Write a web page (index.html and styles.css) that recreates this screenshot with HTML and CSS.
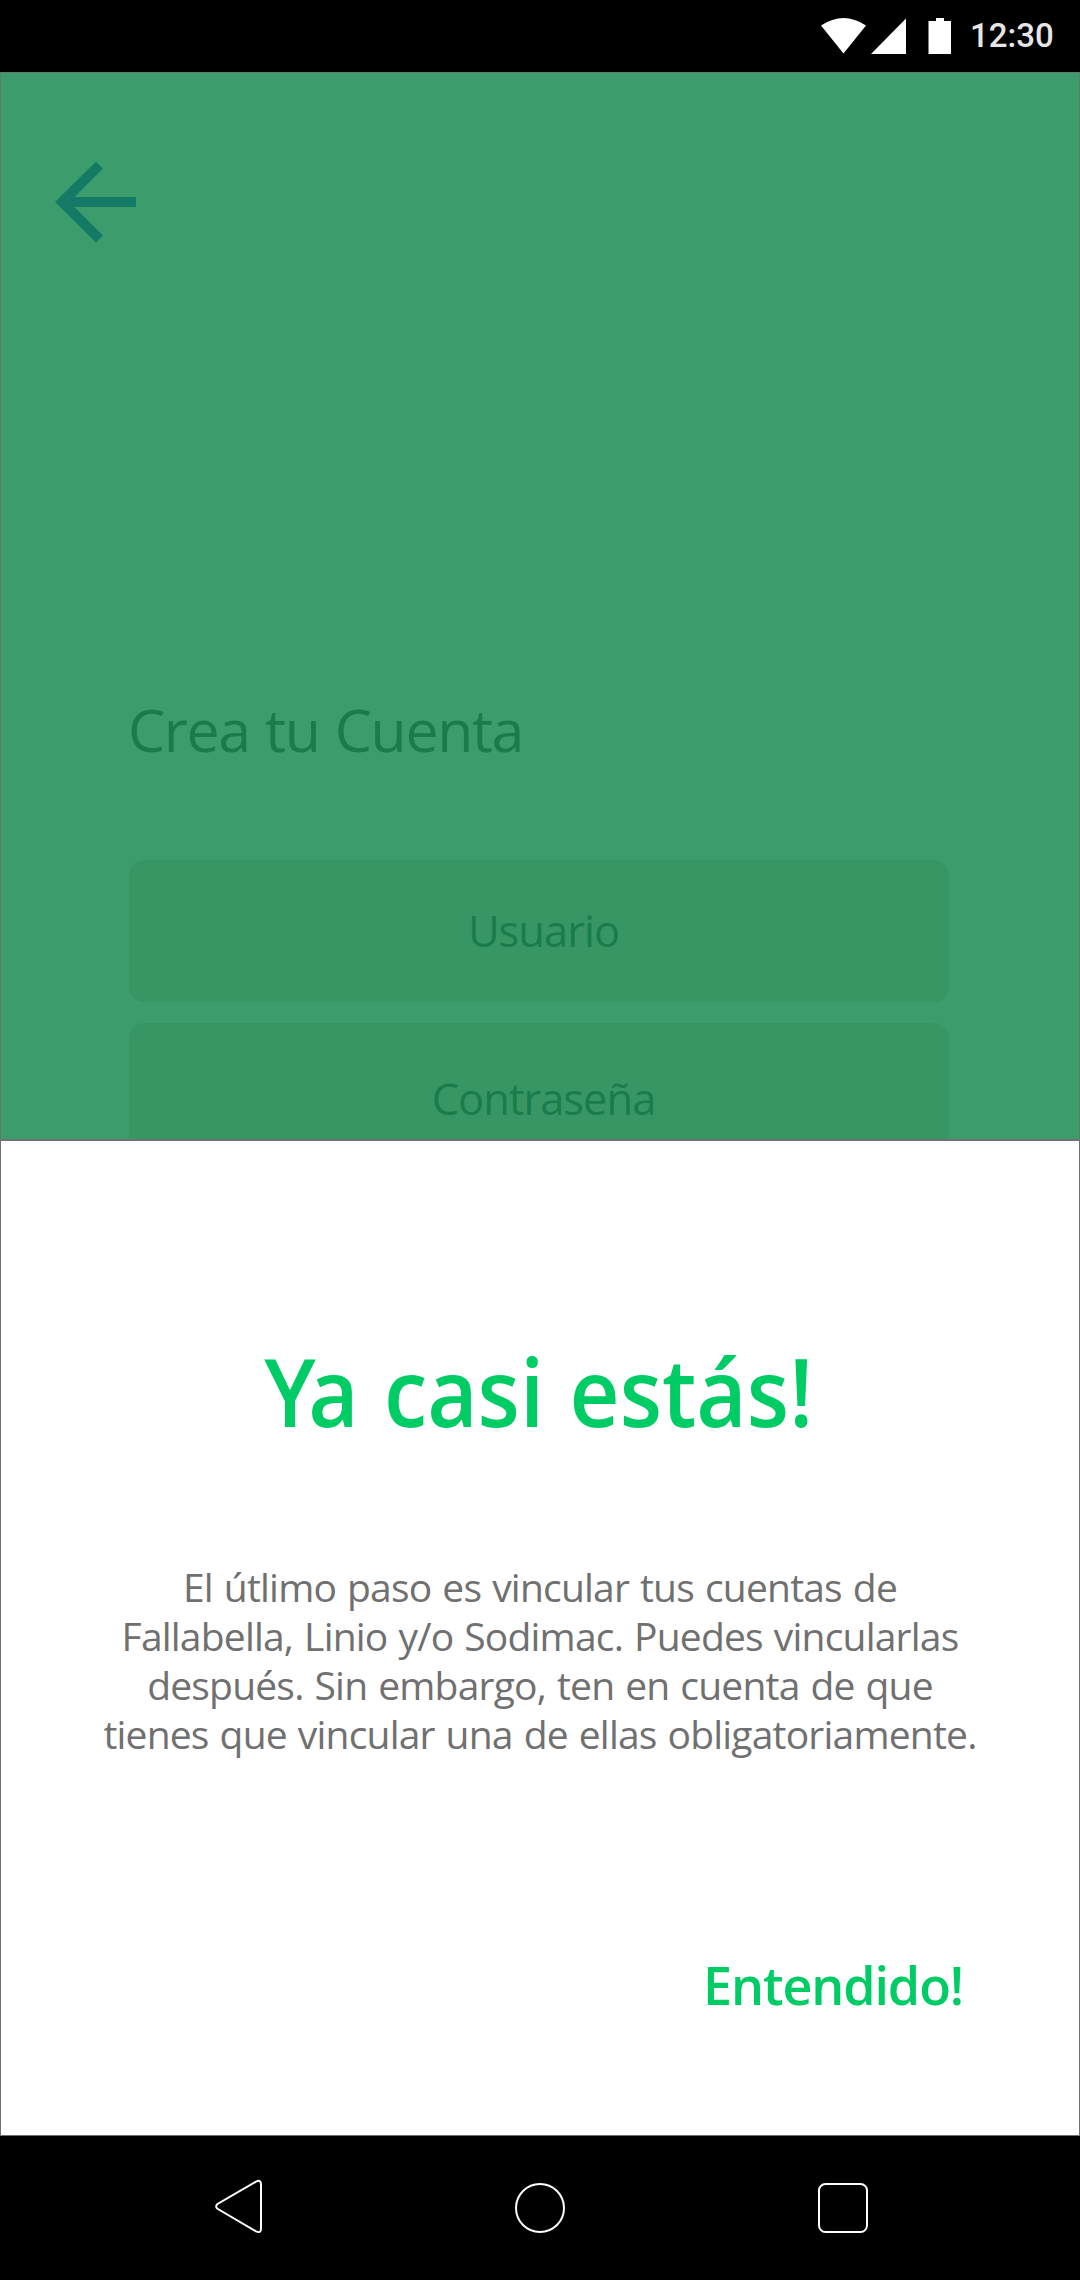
FILE: index.html
```html
<!DOCTYPE html>
<html lang="es">
<head>
<meta charset="utf-8">
<title>Crea tu Cuenta</title>
<link rel="stylesheet" href="styles.css">
</head>
<body>
<div class="phone">
  <header class="status">
    <svg class="status-icons" width="130" height="36" viewBox="0 0 130 36" fill="#fff">
      <path d="M0 7.500Q22.500-7.500 45 7.500L22.500 35.500Z"/>
      <path d="M50 36L85 .500V36Z"/>
      <path d="M107.500 3H115V0H123V3H130V36H107.500Z"/>
    </svg>
    <span class="clock">12:30</span>
  </header>
  <main class="account">
    <svg class="back" width="82" height="82" viewBox="0 0 82 82">
      <path d="M0 41L41 .500L48 7.500L19.500 36H81V46H19.500L48 74.500L41 81.500Z"/>
    </svg>
    <h1 class="heading">Crea tu Cuenta</h1>
    <div class="field user">Usuario</div>
    <div class="field password">Contraseña</div>
  </main>
  <section class="sheet">
    <h2 class="title"><span class="kern">Y</span>a casi estás!</h2>
    <p class="message">El útlimo paso es vincular tus cuentas de<br>Fallabella, Linio y/o Sodimac. Puedes vincularlas<br>después. Sin embargo, ten en cuenta de que<br>tienes que vincular una de ellas obligatoriamente.</p>
    <button class="confirm">Entendido!</button>
  </section>
  <nav class="nav">
    <svg width="1080" height="144" viewBox="0 0 1080 144" fill="none" stroke="#fff" stroke-width="2">
      <path d="M217.500 68Q214.800 70.400 217.500 72.800L256 95.400Q261 97.700 261 92.700V48.200Q261 43.200 256 45.700Z"/>
      <circle cx="540" cy="72" r="24"/>
      <rect x="819" y="48" width="48" height="48" rx="6.500"/>
    </svg>
  </nav>
</div>
</body>
</html>
```
FILE: styles.css
```css
* { box-sizing: border-box; }

body {
  margin: 0;
  background: #000;
  font-family: "Open Sans", "Noto Sans", sans-serif;
}

.phone {
  width: 1080px;
  height: 2280px;
  display: flex;
  flex-direction: column;
  overflow: hidden;
}

.status {
  height: 72px;
  display: flex;
  flex: none;
  padding: 18px 0 0 821px;
  gap: 19px;
  background: #000;
}

.status-icons { flex: none; }

.clock {
  font: 500 33px/35px Roboto, sans-serif;
  color: #e6e6e6;
}

.account {
  height: 1068px;
  flex: none;
  display: flex;
  flex-direction: column;
  padding: 88px 130px 0 128px;
  border: 1px solid #5c7f6c;
  border-bottom-color: #707070;
  background: #3d9c6c;
  color: #1b7c4b;
  overflow: hidden;
}

.back {
  flex: none;
  margin-left: -74px;
  fill: #147a66;
}

.heading {
  margin: 446px 0 91px -1px;
  font-size: 59px;
  line-height: 80px;
  font-weight: 400;
  letter-spacing: -1.4px;
  word-spacing: 1.5px;
}

.field {
  height: 142px;
  flex: none;
  display: flex;
  align-items: center;
  justify-content: center;
  margin-bottom: 21px;
  padding-left: 9px;
  border-radius: 15px;
  background: #389665;
  font-size: 43.5px;
  letter-spacing: -1px;
}

.user { padding-bottom: 2px; }
.password { padding-top: 8px; }

.sheet {
  height: 996px;
  flex: none;
  display: flex;
  flex-direction: column;
  border: 1px solid #707070;
  padding-top: 190px;
  background: #fff;
  text-align: center;
}

.title {
  margin: 0 0 111px;
  padding-right: 3px;
  font-size: 94px;
  line-height: 120px;
  font-weight: 650;
  word-spacing: 3px;
  transform: scaleX(.925);
  color: #0c6;
}

.kern { letter-spacing: -8px; }

.message {
  margin: 0;
  font-size: 39px;
  line-height: 49px;
  letter-spacing: -.8px;
  word-spacing: 1.6px;
  color: #707070;
}

.confirm {
  align-self: flex-end;
  margin: 192px 116px 0 0;
  padding: 0;
  border: 0;
  background: none;
  font: 600 52px/70px "Open Sans", "Noto Sans", sans-serif;
  letter-spacing: -1.1px;
  color: #0c6;
}

.nav {
  height: 144px;
  flex: none;
  background: #000;
}
```
